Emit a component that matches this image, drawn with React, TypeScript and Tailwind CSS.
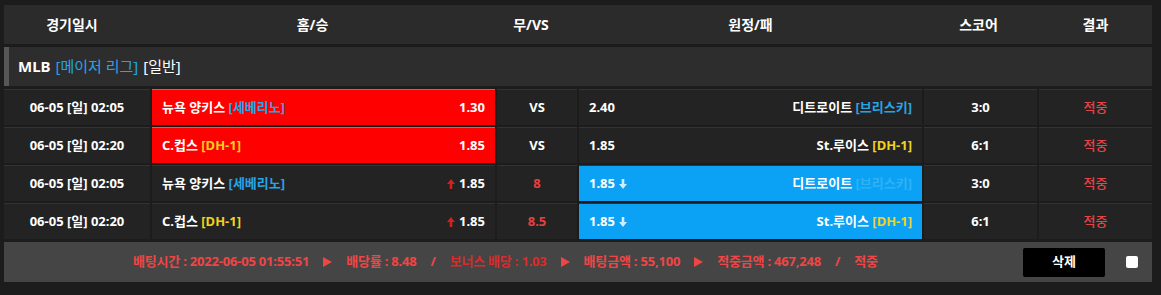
import React from 'react'

const cols = 'grid grid-cols-[146px_343px_80px_343px_113px_113px] gap-x-[2px]'

type Row = {
  date: string
  home: string
  homeTag: string
  homeTagColor: string
  homeOdds: string
  homePicked: boolean
  homeUp: boolean
  mid: string
  midRed: boolean
  awayOdds: string
  away: string
  awayTag: string
  awayTagColor: string
  awayPicked: boolean
  score: string
}

const BLUE = 'text-[#27a4e6]'
const YELLOW = 'text-[#f2d21b]'

const rows: Row[] = [
  {
    date: '06-05 [일] 02:05', home: '뉴욕 양키스', homeTag: '[세베리노]', homeTagColor: BLUE, homeOdds: '1.30',
    homePicked: true, homeUp: false, mid: 'VS', midRed: false, awayOdds: '2.40', away: '디트로이트',
    awayTag: '[브리스키]', awayTagColor: BLUE, awayPicked: false, score: '3:0',
  },
  {
    date: '06-05 [일] 02:20', home: 'C.컵스', homeTag: '[DH-1]', homeTagColor: YELLOW, homeOdds: '1.85',
    homePicked: true, homeUp: false, mid: 'VS', midRed: false, awayOdds: '1.85', away: 'St.루이스',
    awayTag: '[DH-1]', awayTagColor: YELLOW, awayPicked: false, score: '6:1',
  },
  {
    date: '06-05 [일] 02:05', home: '뉴욕 양키스', homeTag: '[세베리노]', homeTagColor: BLUE, homeOdds: '1.85',
    homePicked: false, homeUp: true, mid: '8', midRed: true, awayOdds: '1.85', away: '디트로이트',
    awayTag: '[브리스키]', awayTagColor: BLUE, awayPicked: true, score: '3:0',
  },
  {
    date: '06-05 [일] 02:20', home: 'C.컵스', homeTag: '[DH-1]', homeTagColor: YELLOW, homeOdds: '1.85',
    homePicked: false, homeUp: true, mid: '8.5', midRed: true, awayOdds: '1.85', away: 'St.루이스',
    awayTag: '[DH-1]', awayTagColor: YELLOW, awayPicked: true, score: '6:1',
  },
]

const UpArrow = () => (
  <svg width="8" height="10" viewBox="0 0 8 10" className="mr-[4px]">
    <path d="M4 0 L8 5 L5.3 5 L5.3 10 L2.7 10 L2.7 5 L0 5 Z" fill="#d32020" />
  </svg>
)

const DownArrow = () => (
  <svg width="8" height="10" viewBox="0 0 8 10" className="ml-[4px]">
    <path d="M4 10 L8 5 L5.3 5 L5.3 0 L2.7 0 L2.7 5 L0 5 Z" fill="#cdeeff" />
  </svg>
)

const Play = () => (
  <svg width="9" height="10" viewBox="0 0 9 10">
    <path d="M0 0 L9 5 L0 10 Z" fill="#f04545" />
  </svg>
)

const cell = 'h-[36px] flex items-center border-t border-[#333333]'

const App = () => {
  return (
    <div className="w-[1161px] h-[295px] bg-[#1c1c1c] pt-[5px] font-['Noto_Sans','Noto_Sans_CJK_KR',sans-serif] font-bold text-white">
      <div className="ml-[4px] w-[1148px]">
        <div className={`${cols} h-[39px] bg-[#2b2b2b] items-center text-[14px]`}>
          <div className="text-center -ml-[10px]">경기일시</div>
          <div className="text-center -ml-[22px]">홈/승</div>
          <div className="text-center -ml-[12px]">무/VS</div>
          <div className="text-center">원정/패</div>
          <div className="text-center -ml-[4px]">스코어</div>
          <div className="text-center">결과</div>
        </div>

        <div className="mt-[3px] h-[39px] bg-[#2d2d2d] border-l-[5px] border-[#575757] flex items-center pl-[9px] text-[15px]">
          <span>MLB</span>
          <span className="ml-[5px] text-[#27a4e6] font-normal">[메이저 리그]</span>
          <span className="ml-[5px] font-normal">[일반]</span>
        </div>

        <div className="mt-[3px] flex flex-col gap-y-[2px] text-[13px]">
          {rows.map((r, i) => (
            <div key={i} className={cols}>
              <div className={`${cell} bg-[#232323] justify-center`}>{r.date}</div>
              <div
                className={`${cell} justify-between px-[10px] ${
                  r.homePicked ? 'bg-[#ff0000] border-[#ff4b4b]' : 'bg-[#232323]'
                }`}
              >
                <span>
                  {r.home} <span className={r.homeTagColor}>{r.homeTag}</span>
                </span>
                <span className="flex items-center">
                  {r.homeUp && <UpArrow />}
                  {r.homeOdds}
                </span>
              </div>
              <div className={`${cell} bg-[#232323] justify-center ${r.midRed ? 'text-[#e24141]' : ''}`}>{r.mid}</div>
              <div
                className={`${cell} justify-between px-[10px] ${
                  r.awayPicked ? 'bg-[#0ba1f5] border-[#0ba1f5]' : 'bg-[#232323]'
                }`}
              >
                <span className="flex items-center">
                  {r.awayOdds}
                  {r.awayPicked && <DownArrow />}
                </span>
                <span>
                  {r.away}{' '}
                  <span className={r.awayPicked && r.awayTagColor === BLUE ? 'text-[#2fb2f4]' : r.awayTagColor}>
                    {r.awayTag}
                  </span>
                </span>
              </div>
              <div className={`${cell} bg-[#232323] justify-center`}>{r.score}</div>
              <div className={`${cell} bg-[#232323] justify-center text-[#e84444] font-medium`}>적중</div>
            </div>
          ))}
        </div>

        <div className="mt-[3px] h-[40px] bg-[#454545] flex items-center text-[13px] text-[#f04545]">
          <div className="flex-1 flex items-center pl-[129px] gap-x-[14px] tracking-[-0.2px]">
            <span>배팅시간 : 2022-06-05 01:55:51</span>
            <Play />
            <span>배당률 : 8.48</span>
            <span>/</span>
            <span className="text-[#dc2a2a]">보너스 배당 : 1.03</span>
            <Play />
            <span>배팅금액 : 55,100</span>
            <Play />
            <span>적중금액 : 467,248</span>
            <span>/</span>
            <span>적중</span>
          </div>
          <button className="w-[82px] h-[29px] bg-black text-white text-[13px] rounded-[2px]">삭제</button>
          <div className="ml-[21px] mr-[14px] w-[12px] h-[12px] bg-white rounded-[2px]" />
        </div>
      </div>
    </div>
  )
}

export default App
